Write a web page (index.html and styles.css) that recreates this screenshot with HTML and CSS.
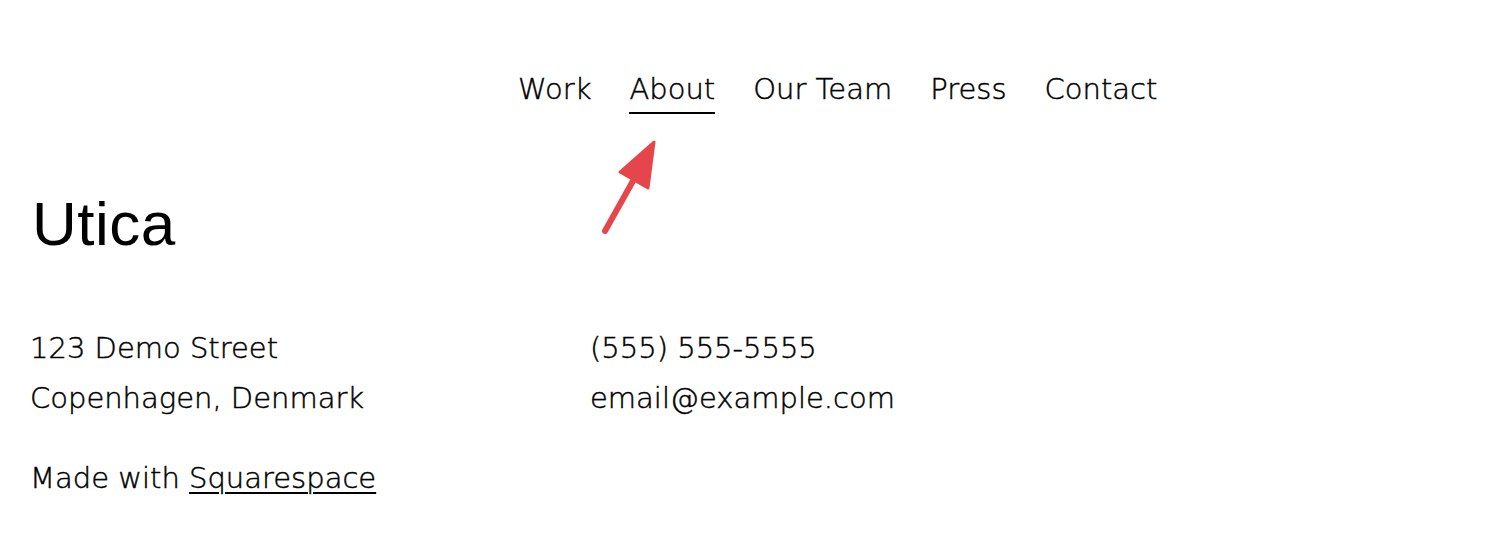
FILE: index.html
```html
<!DOCTYPE html>
<html lang="en">
<head>
<meta charset="utf-8">
<title>Utica</title>
<link rel="stylesheet" href="styles.css">
</head>
<body>
<header class="site-header">
  <nav class="main-nav">
    <a class="nav-link" href="#">Work</a>
    <a class="nav-link active" href="#">About</a>
    <a class="nav-link" href="#">Our Team</a>
    <a class="nav-link" href="#">Press</a>
    <a class="nav-link" href="#">Contact</a>
  </nav>
</header>
<svg class="pointer-arrow" width="80" height="110" viewBox="590 130 80 110" aria-hidden="true">
  <line x1="605" y1="231" x2="633" y2="181" stroke="#e4464b" stroke-width="6" stroke-linecap="round"/>
  <polygon points="654,142 648,188 620,172" fill="#e4464b" stroke="#e4464b" stroke-width="3" stroke-linejoin="round"/>
</svg>
<main class="footer-block">
  <h1 class="brand">Utica</h1>
  <div class="contact-grid">
    <div class="contact-col">
      <p class="line">123 Demo Street</p>
      <p class="line">Copenhagen, Denmark</p>
    </div>
    <div class="contact-col">
      <p class="line">(555) 555-5555</p>
      <p class="line">email@example.com</p>
    </div>
  </div>
  <p class="made-with">Made with <a class="sq-link" href="#">Squarespace</a></p>
</main>
</body>
</html>
```
FILE: styles.css
```css
html, body {
  margin: 0;
  padding: 0;
  background: #fff;
  color: #000;
}
body {
  font-family: "DejaVu Sans", "Open Sans", sans-serif;
  font-weight: 200;
  -webkit-text-stroke: 0.45px #000;
}
.site-header {
  padding: 68px 0 0 518px;
}
.main-nav {
  display: flex;
  gap: 38px;
}
.nav-link {
  display: block;
  font-size: 29px;
  line-height: 42px;
  color: #000;
  text-decoration: none;
  padding-bottom: 2px;
  border-bottom: 2px solid transparent;
}
.nav-link.active {
  border-bottom-color: #000;
}
.pointer-arrow {
  position: absolute;
  left: 590px;
  top: 130px;
}
.footer-block {
  padding: 0 0 0 30px;
}
.brand {
  margin: 79px 0 0 2px;
  font-family: "Liberation Sans", Arial, sans-serif;
  font-weight: 400;
  -webkit-text-stroke: 0;
  font-size: 62px;
  line-height: 62px;
  letter-spacing: 0.5px;
}
.contact-grid {
  display: grid;
  grid-template-columns: 560px 1fr;
  margin-top: 68px;
}
.line {
  margin: 0;
  font-size: 29px;
  line-height: 50px;
}
.made-with {
  margin: 30px 0 0;
  font-size: 29px;
  line-height: 50px;
}
.sq-link {
  color: #000;
  text-decoration: underline;
  text-decoration-thickness: 2px;
  text-underline-offset: 4px;
}
```
